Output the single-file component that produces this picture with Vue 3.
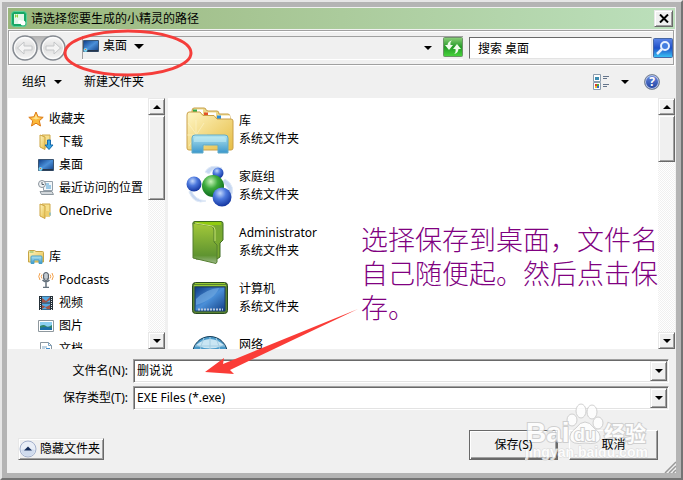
<script setup>
import { ref } from 'vue';

const fileName = ref('删说说');
const fileType = ref('exe');
const search = ref('搜索 桌面');

const groups = [
  {
    name: '收藏夹',
    icon: 'star',
    items: [
      { name: '下载', icon: 'download' },
      { name: '桌面', icon: 'desktop' },
      { name: '最近访问的位置', icon: 'recent' },
      { name: 'OneDrive', icon: 'folder' }
    ]
  },
  {
    name: '库',
    icon: 'library',
    items: [
      { name: 'Podcasts', icon: 'podcast' },
      { name: '视频', icon: 'video' },
      { name: '图片', icon: 'picture' },
      { name: '文档', icon: 'document' }
    ]
  }
];

const files = [
  { name: '库', icon: 'big-library' },
  { name: '家庭组', icon: 'homegroup' },
  { name: 'Administrator', icon: 'user-folder' },
  { name: '计算机', icon: 'computer' },
  { name: '网络', icon: 'network' }
];
</script>

<template>
  <div class="window">
    <svg class="defs" aria-hidden="true">
      <defs>
        <linearGradient id="g-yellow" x1="0" y1="0" x2="1" y2="1">
          <stop offset="0" stop-color="#fff6c4" />
          <stop offset="1" stop-color="#e6bd45" />
        </linearGradient>
        <linearGradient id="g-cyan" x1="0" y1="0" x2="0" y2="1">
          <stop offset="0" stop-color="#b4e6ef" />
          <stop offset="1" stop-color="#3b97cc" />
        </linearGradient>
        <linearGradient id="g-screen" x1="0" y1="0" x2="1" y2="1">
          <stop offset="0" stop-color="#0d3c86" />
          <stop offset="0.5" stop-color="#4a8fd8" />
          <stop offset="1" stop-color="#123f85" />
        </linearGradient>
        <linearGradient id="g-green" x1="0" y1="0" x2="0" y2="1">
          <stop offset="0" stop-color="#a4c93a" />
          <stop offset="0.8" stop-color="#5f9430" />
          <stop offset="1" stop-color="#9db98b" />
        </linearGradient>
        <radialGradient id="g-ballblue" cx="0.4" cy="0.3" r="0.7">
          <stop offset="0" stop-color="#c3d8fb" />
          <stop offset="0.45" stop-color="#4c78dd" />
          <stop offset="1" stop-color="#1436a0" />
        </radialGradient>
        <radialGradient id="g-ballgreen" cx="0.4" cy="0.3" r="0.7">
          <stop offset="0" stop-color="#c8f3b8" />
          <stop offset="0.45" stop-color="#3cab3c" />
          <stop offset="1" stop-color="#0d6a1c" />
        </radialGradient>
        <linearGradient id="g-ring" x1="0" y1="0" x2="0" y2="1">
          <stop offset="0" stop-color="#fafafa" />
          <stop offset="0.5" stop-color="#dedede" />
          <stop offset="1" stop-color="#f8f8f8" />
        </linearGradient>
        <linearGradient id="g-plate" x1="0" y1="0" x2="0" y2="1">
          <stop offset="0" stop-color="#b0b0b0" />
          <stop offset="1" stop-color="#f0f0f0" />
        </linearGradient>
        <linearGradient id="g-refresh" x1="0" y1="0" x2="0" y2="1">
          <stop offset="0" stop-color="#8ccf7a" />
          <stop offset="0.5" stop-color="#239a26" />
          <stop offset="1" stop-color="#48d53c" />
        </linearGradient>
        <linearGradient id="g-search" x1="0" y1="0" x2="0" y2="1">
          <stop offset="0" stop-color="#5c86e8" />
          <stop offset="0.5" stop-color="#1f50c8" />
          <stop offset="1" stop-color="#38c4f5" />
        </linearGradient>
      </defs>

      <symbol id="star" viewBox="0 0 16 16">
        <path d="M8 1l2.100 4.800 5.100.500-3.900 3.500 1.200 5.200L8 12.200 3.500 15l1.200-5.200L.8 6.300l5.100-.5z" fill="#fbb93a" stroke="#dc7a17" />
        <path d="M8 3l1.300 3.500 3.500.4L8 8.500 3.500 7l3-.5z" fill="#ffe28c" />
      </symbol>
      <symbol id="folder" viewBox="0 0 16 16">
        <path d="M4 1h8v12H4z" fill="#f6df8c" stroke="#cfa94a" />
        <path d="M2 1l5 2v12.500L2 13z" fill="url(#g-yellow)" stroke="#cda443" />
        <path d="M7.500 8h4.500v5.500H7.500z" fill="#efcf6c" />
        <path d="M12 9.500v3" stroke="#53b3dc" />
      </symbol>
      <symbol id="download" viewBox="0 0 16 16">
        <use href="#folder" />
        <path d="M9.500 6h3v5h2.500l-4 4.500L7 11h2.500z" fill="#37a5e5" stroke="#1669aa" />
      </symbol>
      <symbol id="desktop" viewBox="0 0 16 16">
        <path d="M0.500 2.500h15v11H0.500z" fill="url(#g-screen)" stroke="#3b5572" />
        <path d="M1 12h14v1.500H1z" fill="#25364d" />
        <circle cx="2.500" cy="12" r="2" fill="#7cd4f2" />
        <path d="M2 11h1v1H2z" fill="#f06a32" />
      </symbol>
      <symbol id="recent" viewBox="0 0 16 16">
        <path d="M5.500 1.500h9v9h-9z" fill="#f3f7fa" stroke="#95a0aa" />
        <path d="M8 4h3M8 6h5M8 8h5" stroke="#499cd0" />
        <path d="M2 11.500h12l1.500 3h-12z" fill="#d3d8dc" stroke="#8e989f" />
        <circle cx="4" cy="4" r="3.500" fill="#eef1f3" stroke="#8a949c" />
        <path d="M4 2v2.500h2" fill="none" stroke="#56626c" />
      </symbol>
      <symbol id="library" viewBox="0 0 16 16">
        <path d="M.5 2.500q0-1 1-1h5l1.500 1h6.500q1 0 1 1v9.500H.5z" fill="url(#g-yellow)" stroke="#c7a545" />
        <path d="M1.500 3h4" stroke="#73b75d" />
        <path d="M3 14.500V8q0-1 1-1h9q1 0 1 1v6.500h-3V11H6v3.500z" fill="url(#g-cyan)" stroke="#469fca" />
      </symbol>
      <symbol id="podcast" viewBox="0 0 16 16">
        <path d="M2 1q-2.500 3.500 0 7M4 2.500q-1.500 2 0 4M14 1q2.500 3.500 0 7M12 2.500q1.500 2 0 4" fill="none" stroke="#f2a04c" />
        <rect x="5.500" y="0.500" width="5" height="8" rx="2.500" fill="#88939d" stroke="#59636d" />
        <path d="M6 3h4M6 5h4M8 1v7" stroke="#d9dee2" />
        <path d="M4.500 8q3.500 3.500 7 0M8 10v5M5 15.500h6" fill="none" stroke="#65727d" stroke-width="1.500" />
      </symbol>
      <symbol id="video" viewBox="0 0 16 16">
        <path d="M1 1h14v14H1z" fill="#253038" />
        <path d="M4 1.500h8v6H4zM4 8.500h8v6H4z" fill="#55a9e3" />
        <path d="M4 3l4 3 4-4v3L8 7.500H4zM4 10l4 2 4-2v4H9l-2-2-3 2z" fill="#a05447" />
        <path d="M2.500 2v13M13.500 2v13" stroke="#e7edf0" stroke-dasharray="1 1" />
      </symbol>
      <symbol id="picture" viewBox="0 0 16 16">
        <path d="M.5 2.500h15v11H.5z" fill="#fff" stroke="#8f989e" />
        <path d="M2 4h12v8H2z" fill="#8ccff0" />
        <path d="M2 8q4-2 6 0t6-1v5H2z" fill="#328468" />
        <path d="M2 10q6-2 12 0v2H2z" fill="#1b6fa9" />
      </symbol>
      <symbol id="document" viewBox="0 0 16 16">
        <path d="M2.500 1.500h8l3 3v11h-11z" fill="#fff" stroke="#8a969f" />
        <path d="M10.500 1.500v3h3M4 6h5M4 8h3M4 10h3" fill="none" stroke="#7ea6c5" />
        <path d="M8 7h4v4H8z" fill="#438fce" />
      </symbol>

      <symbol id="big-library" viewBox="0 0 48 48">
        <path d="M6 5q0-3 2-3h10q2 0 2 2l2 1h9q2 0 2 3h9q2 0 2 3v30H6z" fill="#edda8c" stroke="#c7a04a" />
        <path d="M8 3.500h9V8H8zM20 6.500h10V11H20zM32 9.500h12V13H32z" fill="#fff" />
        <path d="M7 3.500h4V7H7z" fill="#2eaa4b" />
        <path d="M18 6.500h4V10h-4z" fill="#e25126" />
        <path d="M31 9.500h4V13h-4z" fill="#288bd8" />
        <path d="M1 9q0-3 2-3h11l3 3.500h11l3 3.500h14q2 0 2 2v27q0 2-2 2H3q-2 0-2-2z" fill="url(#g-yellow)" stroke="#caa048" />
        <path d="M2 17l17 23M18 17L3 40M10 14v30M1 29h20" stroke="#fff8d5" opacity="0.500" />
        <path d="M6 47V32q0-3 3-3h30q3 0 3 3v15H32v-8H17v8z" fill="url(#g-cyan)" stroke="#60abc9" />
        <path d="M8 36v-3q0-2 2-2h28q2 0 2 2v3H8" fill="#caf2f7" opacity="0.500" />
      </symbol>
      <symbol id="homegroup" viewBox="0 0 48 48">
        <path d="M19 10q5-9 17-4-9-1-13 6zM39 17q12 7 5 20 0-12-8-17zM5 27q3 11 15 12-12 4-17-9z" fill="#c7d8f2" stroke="#dfe9f7" />
        <circle cx="32" cy="11" r="5.500" fill="url(#g-ballblue)" />
        <circle cx="8" cy="22" r="7.500" fill="url(#g-ballblue)" />
        <circle cx="27" cy="24" r="11" fill="url(#g-ballgreen)" />
        <circle cx="36" cy="35" r="9.500" fill="url(#g-ballblue)" />
      </symbol>
      <symbol id="user-folder" viewBox="0 0 48 48">
        <path d="M7 5q0-1.500 2-1.500h26q2 0 2 2V22l-3 3v14l-3 2H10z" fill="#79a931" stroke="#3f6d22" />
        <path d="M9 4h26v3H9z" fill="#91cc0f" />
        <path d="M7 5l18 3q3 1 3 4v12l3 3v17l-1 1.500L7 40z" fill="url(#g-green)" stroke="#557f30" />
        <path d="M9 5l17 3q3 1 3 4v11" fill="none" stroke="#c8e473" />
      </symbol>
      <symbol id="computer" viewBox="0 0 48 48">
        <rect x="6.500" y="8.500" width="35" height="31" rx="3" fill="#588132" stroke="#294b1d" />
        <path d="M9 9.500h30M8 11.500h32" stroke="#97cb34" />
        <path d="M9 13h30v24H9z" fill="url(#g-screen)" stroke="#193c6d" />
        <path d="M10 25q10-10 23-11-4 11-23 17z" fill="#6da7df" opacity="0.700" />
        <path d="M12 35.500h25" stroke="#b9c7de" stroke-width="2" stroke-dasharray="2 1" />
      </symbol>
      <symbol id="network" viewBox="0 0 48 48">
        <circle cx="24" cy="24" r="17.500" fill="#4999c9" stroke="#173e59" />
        <path d="M10 15q14-12 28 0-14 7-28 0z" fill="#c9e5f3" />
        <path d="M24 7v34M7 24h34M9 16h30M18 8q-8 16 0 32M30 8q8 16 0 32" fill="none" stroke="#a5cde2" />
      </symbol>
    </svg>

    <header class="title-bar">
      <svg class="app-icon" viewBox="0 0 16 16" aria-hidden="true">
        <rect x="0.500" y="0.500" width="15" height="15" rx="3" fill="#17a765" stroke="#55d295" />
        <path d="M3 3h10v7l-4 3H3z" fill="#e2f7e8" />
        <path d="M4.500 3.500v3M6.500 3.500v3M4.500 5h2" stroke="#8bd33c" />
        <circle cx="9" cy="11" r="2" fill="#fff" />
        <circle cx="12" cy="12" r="2.500" fill="#fff" />
      </svg>
      <h1>请选择您要生成的小精灵的路径</h1>
      <button class="close raised" type="button" aria-label="关闭">
        <svg width="10" height="9" viewBox="0 0 10 9"><path d="M1 0.500l8 8M9 0.500l-8 8" stroke="#000" stroke-width="2" /></svg>
      </button>
    </header>

    <nav class="nav-bar">
      <div class="travel">
        <svg class="plate" viewBox="0 0 28 18" aria-hidden="true">
          <path d="M0 0h28v18q-14-8-28 0z" fill="url(#g-plate)" />
        </svg>
        <button type="button" aria-label="后退">
          <svg viewBox="0 0 26 26">
            <circle cx="13" cy="13" r="12" fill="url(#g-ring)" stroke="#858a91" stroke-width="1.500" />
            <circle cx="13" cy="13" r="10.500" fill="none" stroke="#fff" />
            <path d="M5.500 13L12 7v4h8v4h-8v4z" fill="#f4f4f4" stroke="#c4c6c8" />
          </svg>
        </button>
        <button type="button" aria-label="前进">
          <svg viewBox="0 0 26 26">
            <circle cx="13" cy="13" r="12" fill="url(#g-ring)" stroke="#858a91" stroke-width="1.500" />
            <circle cx="13" cy="13" r="10.500" fill="none" stroke="#fff" />
            <path d="M20.500 13L14 7v4H6v4h8v4z" fill="#f4f4f4" stroke="#c4c6c8" />
          </svg>
        </button>
      </div>
      <div class="address">
        <button class="crumb" type="button">
          <svg class="icon"><use href="#desktop" /></svg>
          桌面
          <i class="caret wide"></i>
        </button>
        <button class="history" type="button" aria-label="以前的位置"><i class="caret"></i></button>
        <button class="square" type="button" aria-label="刷新">
          <svg viewBox="0 0 20 20">
            <rect x="0.500" y="0.500" width="19" height="19" rx="1" fill="url(#g-refresh)" stroke="#6d9369" />
            <path d="M9 3.500q-2 1-1.500 4.500H10l-4 5-4-5h2.500Q5 4 9 3.500zM11 17q2-1 1.500-5H10l4-5 4 5h-2.500q-.5 4.500-4.500 5z" fill="#effcec" />
          </svg>
        </button>
      </div>
      <div class="search">
        <input v-model="search" type="text" aria-label="搜索" />
        <button class="square" type="button" aria-label="搜索">
          <svg viewBox="0 0 20 20">
            <rect x="0.500" y="0.500" width="19" height="19" rx="1" fill="url(#g-search)" stroke="#4767a5" />
            <circle cx="12" cy="8" r="4" fill="#447de0" stroke="#e7f0ff" stroke-width="2" />
            <path d="M9 11l-5 5" stroke="#e7f0ff" stroke-width="2.500" />
          </svg>
        </button>
      </div>
    </nav>

    <div class="toolbar">
      <button type="button">组织 <i class="caret"></i></button>
      <button type="button">新建文件夹</button>
      <button class="views" type="button" aria-label="更改视图">
        <svg class="icon" viewBox="0 0 16 16">
          <path d="M.5.500h7v7h-7zM.5 8.500h7v7h-7z" fill="#fff" stroke="#8b9cad" />
          <path d="M2 3h4v3H2z" fill="#3b8cb1" />
          <path d="M2 10h2v2H2z" fill="#e43b2d" /><path d="M4 10h2v2H4z" fill="#4bae33" />
          <path d="M2 12h2v2H2z" fill="#f0bd22" /><path d="M4 12h2v2H4z" fill="#3264cf" />
          <path d="M10 2.500h6M10 4.500h4M10 10.500h6M10 12.500h4" stroke="#65758b" />
        </svg>
        <i class="caret"></i>
      </button>
      <button class="help" type="button" aria-label="获取帮助"><span>?</span></button>
    </div>

    <main class="browser">
      <aside class="pane sidebar">
        <div class="tree">
          <ul v-for="group in groups" :key="group.name">
            <li><svg class="icon"><use :href="'#' + group.icon" /></svg>{{ group.name }}</li>
            <li v-for="item in group.items" :key="item.name" class="child">
              <svg class="icon"><use :href="'#' + item.icon" /></svg>{{ item.name }}
            </li>
          </ul>
        </div>
        <div class="scrollbar">
          <button class="raised" type="button" aria-label="向上滚动"><i class="caret up"></i></button>
          <div class="thumb raised"></div>
          <button class="raised end" type="button" aria-label="向下滚动"><i class="caret"></i></button>
        </div>
      </aside>
      <section class="pane content">
        <ul class="files">
          <li v-for="file in files" :key="file.name">
            <svg class="big-icon"><use :href="'#' + file.icon" /></svg>
            <div>
              <p>{{ file.name }}</p>
              <p>系统文件夹</p>
            </div>
          </li>
        </ul>
        <div class="scrollbar">
          <button class="raised" type="button" aria-label="向上滚动"><i class="caret up"></i></button>
          <div class="thumb short raised"></div>
          <button class="raised end" type="button" aria-label="向下滚动"><i class="caret"></i></button>
        </div>
      </section>
    </main>

    <form id="save-form" class="fields" @submit.prevent>
      <label for="file-name">文件名(N):</label>
      <div class="combo">
        <input id="file-name" v-model="fileName" type="text" />
        <button class="raised" type="button" aria-label="文件名列表"><i class="caret"></i></button>
      </div>
      <label for="file-type">保存类型(T):</label>
      <div class="combo">
        <select id="file-type" v-model="fileType">
          <option value="exe">EXE Files (*.exe)</option>
        </select>
        <span class="raised drop"><i class="caret"></i></span>
      </div>
    </form>

    <footer class="actions">
      <button class="hide-folders raised" type="button">
        <svg width="18" height="18" viewBox="0 0 18 18">
          <circle cx="9" cy="9" r="8" fill="#e9eef7" stroke="#a3b0cc" />
          <path d="M2 10q7-3 14 0-1 6-7 6t-7-6z" fill="#d0dbed" />
          <path d="M5 10.500l4-4 4 4z" fill="#152d5b" />
        </svg>
        隐藏文件夹
      </button>
      <button class="command default" type="submit" form="save-form"><span>保存(S)</span></button>
      <button class="command" type="button"><span>取消</span></button>
    </footer>

    <svg class="grip" viewBox="0 0 12 12" aria-hidden="true">
      <path d="M1 12L12 1M5 12l7-7M9 12l3-3" stroke="#999" stroke-width="1.500" />
    </svg>

    <svg class="marks" aria-hidden="true">
      <ellipse cx="128" cy="53" rx="63" ry="22" fill="none" stroke="#f53d3a" stroke-width="3" />
      <path d="M205 372l19-14-1 6 135-55-128 61 4 4z" fill="#fa3c37" />
    </svg>
    <p class="note">选择保存到桌面，文件名自己随便起。然后点击保存。</p>

    <svg class="watermark" viewBox="0 0 130 66" aria-hidden="true">
      <g fill="#fff" stroke="#c8c8c8">
        <ellipse cx="47" cy="22" rx="5" ry="6" />
        <ellipse cx="56" cy="13" rx="5" ry="7" />
        <ellipse cx="67" cy="14" rx="5" ry="7" />
        <ellipse cx="73" cy="25" rx="5" ry="6" />
        <path d="M60 24q5 0 9 6 7 5 6 11-2 6-15 4-13 2-15-4-1-6 6-11 4-6 9-6z" />
        <text class="brand" x="1" y="44">Bai</text>
        <text class="du" x="49" y="43">du</text>
        <text class="cn" x="79" y="43">经验</text>
      </g>
      <text class="site" x="0" y="59">jingyan.baidu.com</text>
    </svg>
  </div>
</template>

<style>
body {
  margin: 0;
}
</style>

<style scoped>
.window {
  position: relative;
  display: flex;
  flex-direction: column;
  box-sizing: border-box;
  height: 100vh;
  min-height: 400px;
  padding: 5px;
  overflow: hidden;
  border: 2px solid;
  border-color: #e6e6e6 #747474 #747474 #e6e6e6;
  background: #f0f0f0;
  box-shadow: inset 0 0 0 5px #b4b4b4;
  color: #000;
  font-family: "Noto Sans", "Noto Sans CJK SC", sans-serif;
  font-size: 12px;
  line-height: 18px;
}

.defs {
  position: absolute;
  width: 0;
  height: 0;
}

button,
input,
select {
  box-sizing: border-box;
  margin: 0;
  padding: 0;
  border: 0;
  border-radius: 0;
  background: none;
  color: inherit;
  font: inherit;
}

ul,
p,
h1 {
  margin: 0;
  padding: 0;
  list-style: none;
}

svg {
  flex: none;
}

.raised {
  display: flex;
  align-items: center;
  justify-content: center;
  box-sizing: border-box;
  border: 1px solid;
  border-color: #e8e8e8 #696969 #696969 #e8e8e8;
  background: #f0f0f0;
  box-shadow: inset 1px 1px #fff, inset -1px -1px #a0a0a0;
}

.caret {
  flex: none;
  width: 0;
  height: 0;
  border: 4px solid transparent;
  border-top-color: #000;
  border-bottom: 0;
}

.caret.wide {
  border-width: 5px 5px 0;
}

.caret.up {
  border-top: 0;
  border-bottom: 4px solid #000;
}

.icon {
  width: 16px;
  height: 16px;
}

.title-bar {
  display: flex;
  align-items: center;
  flex: none;
  gap: 4px;
  height: 21px;
  margin: 1px 1px 0;
  padding: 0 2px 0 3px;
  background: linear-gradient(90deg, #9ab67c, #bce0bc);
}

.app-icon {
  width: 16px;
  height: 16px;
}

.title-bar h1 {
  flex: 1;
  font-size: 12px;
  font-weight: 400;
}

.close {
  width: 19px;
  height: 17px;
}

.nav-bar {
  display: flex;
  align-items: center;
  flex: none;
  box-sizing: border-box;
  height: 35px;
  margin: 1px 2px 0 1px;
  padding: 0 0 0 3px;
  border: 1px solid #a0a0a0;
  box-shadow: inset 1px 1px #fff, 1px 1px #fff;
}

.travel {
  position: relative;
  display: flex;
  gap: 2px;
  width: 70px;
}

.travel button {
  position: relative;
}

.travel button,
.travel button svg {
  display: block;
  width: 26px;
  height: 26px;
}

.plate {
  position: absolute;
  top: 1px;
  left: 13px;
  width: 28px;
  height: 18px;
}

.address {
  display: flex;
  align-items: flex-start;
  flex: 1;
  height: 22px;
  border-top: 1px solid #a0a0a0;
  border-left: 1px solid #a0a0a0;
  box-shadow: 0 1px #fff;
}

.crumb {
  display: flex;
  align-items: center;
  gap: 4px;
  height: 18px;
}

.crumb .caret {
  margin-left: 3px;
}

.history {
  display: flex;
  align-items: center;
  height: 22px;
  margin-left: auto;
  padding: 0 11px;
}

.square,
.square svg {
  display: block;
  width: 20px;
  height: 20px;
}

.search {
  display: flex;
  align-items: center;
  gap: 1px;
  width: 204px;
  margin-left: 6px;
}

.search input {
  flex: 1;
  min-width: 0;
  height: 22px;
  padding-left: 8px;
  border: 1px solid;
  border-color: #696969 #e3e3e3 #e3e3e3 #696969;
  background: #fff;
}

.toolbar {
  display: flex;
  align-items: center;
  flex: none;
  height: 33px;
  padding: 0 16px 0 15px;
}

.toolbar button {
  display: flex;
  align-items: center;
  gap: 8px;
  margin-right: 22px;
}

.toolbar .views {
  gap: 12px;
  margin: 0 15px 0 auto;
}

.toolbar .help {
  justify-content: center;
  width: 16px;
  height: 16px;
  margin: 0;
  border: 1px solid #7d8792;
  border-radius: 50%;
  background: linear-gradient(#6a8be0, #1c3f9f);
  box-shadow: inset 0 0 0 1px #b8c5e6;
  color: #fff;
  font-weight: 700;
}

.browser {
  display: flex;
  flex: 1;
  gap: 3px;
  min-height: 0;
  margin: 0 1px;
}

.pane {
  display: flex;
  min-height: 0;
  overflow: hidden;
  background: #fff;
}

.sidebar {
  width: 157px;
}

.tree {
  flex: 1;
  min-width: 0;
  padding: 9px 0 0 20px;
  white-space: nowrap;
}

.tree ul {
  margin-bottom: 23px;
}

.tree li {
  display: flex;
  align-items: center;
  gap: 5px;
  height: 23px;
}

.tree .child {
  padding-left: 10px;
}

.content {
  flex: 1;
}

.files {
  flex: 1;
  padding: 4px 0 0 18px;
}

.files li {
  display: flex;
  align-items: center;
  gap: 5px;
  height: 56px;
}

.big-icon {
  width: 48px;
  height: 48px;
}

.scrollbar {
  display: flex;
  flex-direction: column;
  flex: none;
  width: 17px;
  background: repeating-conic-gradient(#fff 0 25%, #f0f0f0 0 50%) 0 0 / 2px 2px;
}

.scrollbar button {
  flex: none;
  height: 17px;
}

.scrollbar .end {
  margin-top: auto;
}

.thumb {
  height: 85px;
}

.thumb.short {
  height: 47px;
}

.fields {
  display: grid;
  grid-template-columns: 121px 1fr;
  align-items: center;
  flex: none;
  gap: 3px 5px;
  margin: 10px 7px 0 0;
}

.fields label {
  text-align: right;
}

.combo {
  display: flex;
  position: relative;
  box-sizing: border-box;
  height: 24px;
  border: 1px solid;
  border-color: #a0a0a0 #fff #fff #a0a0a0;
  box-shadow: inset 1px 1px #696969, inset -1px -1px #e3e3e3;
  background: #fff;
}

.combo input,
.combo select {
  flex: 1;
  min-width: 0;
  padding: 0 20px 0 3px;
  appearance: none;
}

.combo .raised {
  position: absolute;
  top: 1px;
  right: 1px;
  width: 17px;
  height: 20px;
}

.drop {
  pointer-events: none;
}

.actions {
  display: flex;
  align-items: flex-end;
  flex: none;
  gap: 11px;
  margin: 20px 18px 13px 11px;
}

.hide-folders {
  gap: 3px;
  height: 22px;
  margin-right: auto;
  padding: 0 3px 0 0;
}

.command {
  width: 89px;
  height: 30px;
  border: 1px solid;
  border-color: #fff #696969 #696969 #fff;
  box-shadow: inset -1px -1px #a0a0a0;
}

.command span {
  position: relative;
  z-index: 1;
}

.command.default {
  border-color: #696969;
  box-shadow: inset 1px 1px #fff, inset -1px -1px #696969, inset -2px -2px #a0a0a0;
}

.grip {
  position: absolute;
  right: 5px;
  bottom: 5px;
  width: 12px;
  height: 12px;
}

.marks {
  position: absolute;
  top: -2px;
  left: -2px;
  width: 100%;
  height: 100%;
  pointer-events: none;
}

.note {
  position: absolute;
  top: 220px;
  left: 359px;
  width: 300px;
  color: #800080;
  font-family: "Noto Sans CJK SC", sans-serif;
  font-size: 27px;
  font-weight: 300;
  line-height: 34px;
  pointer-events: none;
}

.watermark {
  position: absolute;
  right: 26px;
  bottom: 14px;
  width: 130px;
  height: 66px;
  opacity: 0.8;
  pointer-events: none;
}

.watermark text {
  font-family: "Liberation Sans", "Noto Sans CJK SC", sans-serif;
  font-weight: 700;
  paint-order: stroke;
  stroke-width: 2px;
}

.watermark .brand {
  font-size: 28px;
}

.watermark .du {
  font-size: 18px;
}

.watermark .cn {
  font-size: 21px;
}

.watermark .site {
  fill: #fff;
  stroke: #d4d4d4;
  font-size: 14px;
  stroke-width: 1px;
}
</style>
